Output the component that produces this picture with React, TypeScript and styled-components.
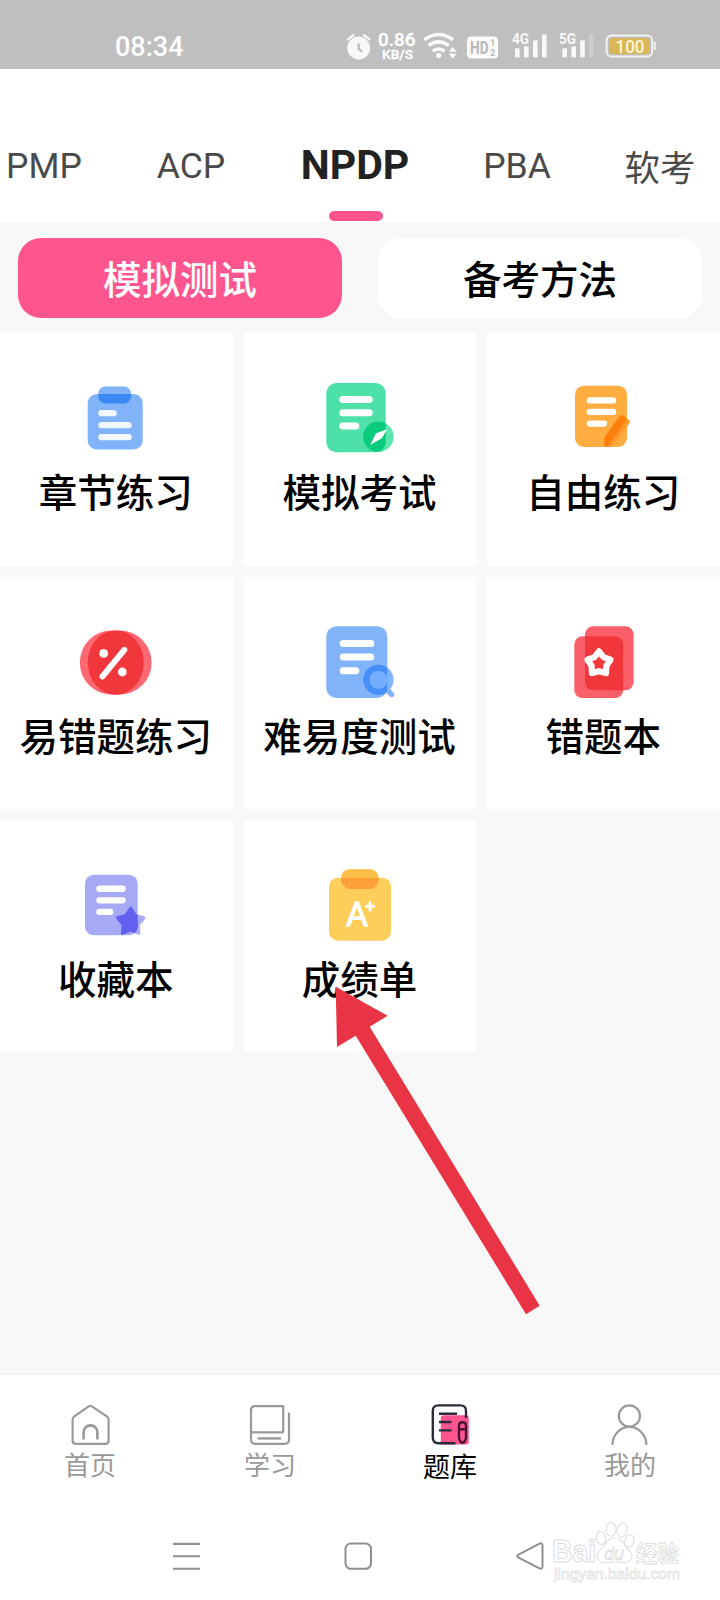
import React from 'react';
import styled, { createGlobalStyle } from 'styled-components';

const Global = createGlobalStyle`
  * { box-sizing: border-box; }
  body { margin: 0; background: #f8f8f8; font-family: Roboto, "Noto Sans CJK SC", sans-serif; }
  svg { display: block; flex: none; }
`;

const Screen = styled.div`
  position: relative;
  display: flex;
  flex-direction: column;
  width: 720px;
  height: 1600px;
  overflow: hidden;
  background: #f8f8f8;
`;

/* ---------- status bar ---------- */
const StatusBar = styled.header`
  display: flex;
  align-items: center;
  height: 69px;
  padding: 24px 64px 0 115px;
  background: #bfbfbf;
  color: #fff;
`;

const Clock = styled.time`
  flex: 1;
  font-size: 27px;
  font-weight: 500;
  line-height: 44px;
`;

const StatusIcons = styled.div`
  display: flex;
  align-items: center;
`;

/* ---------- exam tabs ---------- */
const ExamTabs = styled.nav`
  display: flex;
  align-items: flex-end;
  height: 153px;
  padding-left: 4px;
  background: #fff;
  white-space: nowrap;
`;

const ExamTab = styled.a<{ $active?: boolean; $width: number; $drop?: number }>`
  display: flex;
  flex-direction: column;
  align-items: center;
  flex: none;
  width: ${(p) => p.$width}px;
  color: ${(p) => (p.$active ? '#222' : '#4a4a4a')};
  font-size: ${(p) => (p.$active ? 41 : 35.5)}px;
  font-weight: ${(p) => (p.$active ? 700 : 400)};
  line-height: 60px;
  padding-bottom: ${(p) => (p.$active ? 1 : 26 - (p.$drop ?? 0))}px;
`;

const Indicator = styled.span`
  width: 54px;
  height: 10px;
  margin: 16px 0 0 1px;
  border-radius: 5px;
  background: #fe558f;
`;

/* ---------- switch ---------- */
const Switch = styled.div`
  display: flex;
  gap: 36px;
  padding: 15.5px 18px 15px;
`;

const SwitchButton = styled.button<{ $active?: boolean }>`
  flex: 1;
  height: 80.5px;
  padding: 0 0 2px;
  border: 0;
  border-radius: 23px;
  background: ${(p) => (p.$active ? '#ff558f' : '#fff')};
  color: ${(p) => (p.$active ? '#fff' : '#000')};
  font: 500 38.5px "Noto Sans CJK SC", sans-serif;
`;

/* ---------- tile grid ---------- */
const Grid = styled.main`
  display: grid;
  grid-template-columns: repeat(3, 1fr);
  grid-auto-rows: 232.67px;
  gap: 11px;
  flex: 1;
`;

const Tile = styled.section`
  display: flex;
  flex-direction: column;
  align-items: center;
  padding-top: 44px;
  background: #fff;
`;

const TileLabel = styled.span`
  margin: 5px 1px 0 0;
  color: #000;
  font: 500 38.5px/56px "Noto Sans CJK SC", sans-serif;
  white-space: nowrap;
`;

/* ---------- bottom navigation ---------- */
const TabBar = styled.nav`
  display: flex;
  height: 127px;
  border-top: 2px solid #f2f2f2;
  background: #fff;
`;

const TabItem = styled.a<{ $active?: boolean }>`
  display: flex;
  flex-direction: column;
  align-items: center;
  flex: 1;
  padding-top: 27px;
  color: ${(p) => (p.$active ? '#000' : '#999')};
  font: 400 ${(p) => (p.$active ? 27 : 26)}px/38px "Noto Sans CJK SC", sans-serif;

  span { margin-top: ${(p) => (p.$active ? 1 : -1)}px; }
`;

const SystemBar = styled.footer`
  display: flex;
  justify-content: space-between;
  height: 100px;
  padding: 39px 174px 0 170px;
  background: #fff;
`;

/* ---------- overlays ---------- */
const Pointer = styled.svg`
  position: absolute;
  left: 330px;
  top: 980px;
`;

const Watermark = styled.svg`
  position: absolute;
  left: 545px;
  top: 1515px;
`;

type LineProps = { x: number; y: number; w: number; h?: number; fill?: string };
const Line = ({ x, y, w, h = 6.3, fill = '#fff' }: LineProps) => (
  <rect x={x} y={y} width={w} height={h} rx={h / 2} fill={fill} />
);

const Icon = ({ children }: { children: React.ReactNode }) => (
  <svg width="80" height="80" viewBox="0 0 80 80">{children}</svg>
);

const starPoints = (cx: number, cy: number, outer: number, inner: number) =>
  Array.from({ length: 10 }, (_, i) => {
    const r = i % 2 ? inner : outer;
    const a = ((-90 + i * 36) * Math.PI) / 180;
    return `${(cx + r * Math.cos(a)).toFixed(2)},${(cy + r * Math.sin(a)).toFixed(2)}`;
  }).join(' ');

const ChapterIcon = () => (
  <Icon>
    <rect x="22.3" y="9.5" width="32.7" height="17" rx="7" fill="#80b3f8" />
    <rect x="11.7" y="17" width="55" height="55.5" rx="9" fill="#80b3f8" />
    <path d="M22.3 17H55V19.5a7 7 0 0 1-7 7H29.3a7 7 0 0 1-7-7Z" fill="#3c88f5" />
    <Line x={22.3} y={33} w={18.4} fill="#f1f7ff" />
    <Line x={22.3} y={45} w={33.4} fill="#f1f7ff" />
    <Line x={22.3} y={57} w={33.4} fill="#f1f7ff" />
  </Icon>
);

const MockIcon = () => (
  <Icon>
    <clipPath id="mock"><rect x="6.3" y="6" width="59.4" height="69.3" rx="10" /></clipPath>
    <circle cx="58.4" cy="59.7" r="15.2" fill="#5ce6b1" />
    <rect x="6.3" y="6" width="59.4" height="69.3" rx="10" fill="#4de1a9" />
    <circle cx="58.4" cy="59.7" r="15.2" fill="#08cb7b" clipPath="url(#mock)" />
    <Line x={19.3} y={19} w={33.4} h={7} />
    <Line x={19.3} y={32.3} w={33.4} h={7} />
    <Line x={19.3} y={45.6} w={20} h={7} />
    <path d="M67 52.3 56 56.3 50.3 67.7 62 61.3Z" fill="#fff" />
  </Icon>
);

const FreeIcon = () => (
  <Icon>
    <rect x="11" y="8.7" width="52" height="61.3" rx="9" fill="#ffac40" />
    <path d="M40.4 60.5 55.8 39q1.3-1.6 3-.4l6.2 4.3q1.7 1.3.6 3L52.3 63.9q-2.3 4-6 5l-3.3.9q-2.6.6-2.6-1.3Z" fill="#ff9a2c" />
    <path d="M40.4 60.5 55.8 39q1.3-1.6 3-.4l4.2 3L44.6 69.2q-4.2 1.6-4.2-.7Z" fill="#ff7f0c" />
    <Line x={22.7} y={20.3} w={29.4} />
    <Line x={22.7} y={31.8} w={29.4} />
    <Line x={22.7} y={43.4} w={20.4} />
  </Icon>
);

const PercentIcon = () => (
  <Icon>
    <circle cx="36" cy="41.6" r="32.2" fill="#fd6873" />
    <circle cx="43.4" cy="41.6" r="32.2" fill="#fd6873" />
    <ellipse cx="39.8" cy="41.6" rx="28" ry="32.2" fill="#f2373c" />
    <circle cx="27.7" cy="32.4" r="4.4" fill="#fff" />
    <circle cx="46.3" cy="51" r="4.4" fill="#fff" />
    <path d="M48.3 28.9 26.5 55.4" stroke="#fff" strokeWidth="6" strokeLinecap="round" />
  </Icon>
);

const DifficultyIcon = () => (
  <Icon>
    <clipPath id="sheet"><rect x="6.3" y="5.3" width="61" height="71.7" rx="10" /></clipPath>
    <rect x="6.3" y="5.3" width="61" height="71.7" rx="10" fill="#80b3f8" />
    <path d="m68 69.5 3.6 4" stroke="#80b3f8" strokeWidth="5.4" strokeLinecap="round" />
    <circle cx="58.4" cy="58.8" r="12.1" fill="none" stroke="#80b3f8" strokeWidth="6" />
    <circle cx="58.4" cy="58.8" r="12.1" fill="#73adfb" stroke="#468ff8" strokeWidth="6" clipPath="url(#sheet)" />
    <Line x={19.7} y={19} w={34.6} h={7} />
    <Line x={19.7} y={32.6} w={34.6} h={7} />
    <Line x={19.7} y={46.2} w={19.6} h={7} />
  </Icon>
);

const WrongBookIcon = () => (
  <Icon>
    <rect x="21" y="5.3" width="48.6" height="64" rx="8" fill="#f9606a" />
    <rect x="10.3" y="15.3" width="48.9" height="61.7" rx="8" fill="#f9606a" />
    <path d="M21 15.3H51.2a8 8 0 0 1 8 8V69.3H29a8 8 0 0 1-8-8Z" fill="#f2373c" />
    <polygon points={starPoints(35, 42.4, 12, 7.8)} fill="#f2373c" stroke="#fff" strokeWidth="6.2" strokeLinejoin="round" />
  </Icon>
);

const FavouriteIcon = () => (
  <Icon>
    <clipPath id="note"><rect x="9" y="10.7" width="52.7" height="60.6" rx="9" /></clipPath>
    <rect x="9" y="10.7" width="52.7" height="60.6" rx="9" fill="#a6aaf5" />
    <polygon points={starPoints(54.7, 58, 14, 8)} fill="#aaaafa" stroke="#aaaafa" strokeWidth="3" strokeLinejoin="round" />
    <polygon points={starPoints(54.7, 58, 14, 8)} fill="#6260ef" stroke="#6260ef" strokeWidth="3" strokeLinejoin="round" clipPath="url(#note)" />
    <Line x={20.3} y={21.6} w={29.4} />
    <Line x={20.3} y={33.2} w={29.4} />
    <Line x={20.3} y={44.8} w={17} />
  </Icon>
);

const ScoreIcon = () => (
  <Icon>
    <rect x="21" y="4.9" width="37.7" height="20" rx="9" fill="#fec04b" />
    <rect x="9" y="13.7" width="62" height="63" rx="9" fill="#fece5b" />
    <path d="M21 13.7H58.7V15.9a9 9 0 0 1-9 9H30a9 9 0 0 1-9-9Z" fill="#fda037" />
    <text x="37" y="62" textAnchor="middle" fontFamily="Lato, sans-serif" fontWeight="400" fontSize="33" textLength="21" lengthAdjust="spacingAndGlyphs" fill="#fff" stroke="#fff" strokeWidth="1.3" strokeLinejoin="round">A</text>
    <path d="M50 38.5v7.6M46.2 42.3h7.6" stroke="#fff" strokeWidth="3" strokeLinecap="round" />
  </Icon>
);

const tiles = [
  { label: '章节练习', icon: <ChapterIcon /> },
  { label: '模拟考试', icon: <MockIcon /> },
  { label: '自由练习', icon: <FreeIcon /> },
  { label: '易错题练习', icon: <PercentIcon /> },
  { label: '难易度测试', icon: <DifficultyIcon /> },
  { label: '错题本', icon: <WrongBookIcon /> },
  { label: '收藏本', icon: <FavouriteIcon /> },
  { label: '成绩单', icon: <ScoreIcon /> },
];

const StatusGlyphs = () => (
  <svg width="316" height="40" viewBox="340 26 316 40" fontFamily="Roboto, sans-serif" fill="#fff">
    {/* alarm */}
    <g opacity=".9">
      <circle cx="358.7" cy="47" r="11.4" />
      <path d="M348 38.4 353.4 34.2M369.4 38.4l-5.4-4.2" stroke="#fff" strokeWidth="2.4" strokeLinecap="round" />
      <path d="M358.7 42.5v5.4l3.4 2.8" stroke="#bfbfbf" strokeWidth="2.4" fill="none" />
    </g>
    <text x="378" y="45" fontSize="19" fontWeight="500" textLength="37.5" lengthAdjust="spacingAndGlyphs" stroke="#fff" strokeWidth=".3">0.86</text>
    <text x="382" y="58.2" fontSize="13.5" fontWeight="500" textLength="31" lengthAdjust="spacingAndGlyphs" stroke="#fff" strokeWidth=".3">KB/S</text>
    {/* wifi */}
    <g opacity=".93" fill="none" stroke="#fff" strokeWidth="3.6">
      <path d="M424.3 38.8q14.4-10.6 28.8 0" />
      <path d="M428.6 44.6q10-7.4 20.2 0" />
      <path d="M432.8 50.2q6-4.4 11.8 0" />
    </g>
    <circle cx="438.7" cy="54.4" r="2.5" />
    <path d="m452.7 46 3.8 4.8h-7.6ZM452.700 57.400l3.8-4.600h-7.6Z" />
    {/* HD badge */}
    <rect x="467" y="35.6" width="31" height="21.9" rx="4" opacity=".93" />
    <g fill="#b8b8b8" fontWeight="700">
      <text x="470" y="52.8" fontSize="18" textLength="18.5" lengthAdjust="spacingAndGlyphs">HD</text>
      <text x="490.2" y="45" fontSize="8.6">1</text>
      <text x="490.2" y="54.8" fontSize="8.6">2</text>
    </g>
    {/* signal meters */}
    <g opacity=".9">
      <text x="512" y="43" fontSize="15.5" fontWeight="700" textLength="17" lengthAdjust="spacingAndGlyphs">4G</text>
      <rect x="515" y="47.4" width="4.6" height="9" />
      <rect x="524" y="45.4" width="4.6" height="11" />
      <rect x="533" y="39.4" width="4.6" height="17" />
      <rect x="542" y="33.4" width="4.6" height="23" />
      <text x="559" y="43" fontSize="15.5" fontWeight="700" textLength="17" lengthAdjust="spacingAndGlyphs">5G</text>
      <rect x="562.4" y="47.4" width="4.6" height="9" />
      <rect x="571.4" y="45.4" width="4.6" height="11" />
      <rect x="580.2" y="39.4" width="4.6" height="17" />
      <rect x="589" y="33.4" width="4.6" height="23" opacity=".25" />
    </g>
    {/* battery */}
    <rect x="606.6" y="34.6" width="45.6" height="20.8" rx="5" fill="none" stroke="#f3f3f3" strokeWidth="2" />
    <rect x="609.4" y="37" width="40" height="16" rx="3" fill="#d9b757" />
    <path d="M654.8 40.6v8.4" stroke="#f3f3f3" strokeWidth="1.8" />
    <text x="615.5" y="51.6" fontSize="18" fontWeight="500" textLength="29" lengthAdjust="spacingAndGlyphs" fill="#fff6dc">100</text>
  </svg>
);

const HomeIcon = () => (
  <svg width="44" height="44" viewBox="0 0 44 44" fill="none" stroke="#999" strokeWidth="2.2">
    <path d="M20.6 4.4q1.6-1.1 3.2 0L38.8 14.4q1.8 1.3 1.8 3.4V38.4q0 3.4-3.4 3.4H8q-3.4 0-3.4-3.4V17.8q0-2.1 1.8-3.4Z" />
    <path d="M15.600 37.600V30.300a6.900 6.900 0 0 1 13.800 0v7.300" strokeWidth="2.6" />
  </svg>
);

const StudyIcon = () => (
  <svg width="44" height="44" viewBox="0 0 44 44" fill="none" stroke="#999" strokeWidth="2.2">
    <path d="M35.200 30.400V4.200H7q-4 0-4 4V37.800q0 4 4 4H37q4 0 4-4V10.500M3 30.400H35.200" />
    <path d="M9.600 36.400H33" strokeWidth="2.4" />
  </svg>
);

const BankIcon = () => (
  <svg width="44" height="44" viewBox="0 0 44 44" fill="none" stroke="#2b2b3a" strokeWidth="2.4">
    <rect x="12.8" y="13.2" width="28" height="29.4" rx="3" fill="#ff558f" stroke="none" />
    <path d="M38 16V8.800q0-5.400-5.400-5.400H10.400Q4.800 3.400 4.800 8.800V35.600q0 5.600 5.600 5.600H27.500" />
    <path d="M11 11.800H29M11 20H23.500M11 28.400H23.500" />
    <path d="M31 23.500q0-3.200 3.500-3.200t3.500 3.200V36.500L36 40.500H33L31 36.500ZM31 27.200H38" stroke="#4a1535" strokeLinejoin="round" />
  </svg>
);

const MeIcon = () => (
  <svg width="44" height="44" viewBox="0 0 44 44" fill="none" stroke="#999" strokeWidth="2.2">
    <circle cx="21.4" cy="14" r="10.6" />
    <path d="M4.400 43a17 18.200 0 0 1 34 0" />
  </svg>
);

export default function App() {
  return (
    <>
      <Global />
      <Screen>
        <StatusBar>
          <Clock>08:34</Clock>
          <StatusIcons><StatusGlyphs /></StatusIcons>
        </StatusBar>

        <ExamTabs>
          <ExamTab $width={80}>PMP</ExamTab>
          <ExamTab $width={214}>ACP</ExamTab>
          <ExamTab $width={114} $active>NPDP<Indicator /></ExamTab>
          <ExamTab $width={210}>PBA</ExamTab>
          <ExamTab $width={76} $drop={3}>软考</ExamTab>
        </ExamTabs>

        <Switch>
          <SwitchButton $active>模拟测试</SwitchButton>
          <SwitchButton>备考方法</SwitchButton>
        </Switch>

        <Grid>
          {tiles.map((t) => (
            <Tile key={t.label}>
              {t.icon}
              <TileLabel>{t.label}</TileLabel>
            </Tile>
          ))}
        </Grid>

        <TabBar>
          <TabItem><HomeIcon /><span>首页</span></TabItem>
          <TabItem><StudyIcon /><span>学习</span></TabItem>
          <TabItem $active><BankIcon /><span>题库</span></TabItem>
          <TabItem><MeIcon /><span>我的</span></TabItem>
        </TabBar>

        <SystemBar>
          <svg width="32" height="34" viewBox="0 0 32 34" stroke="#8f8f8f" strokeWidth="2.1">
            <path d="M3 4.900H30M3 17.200H30M3 29.800H30" />
          </svg>
          <svg width="32" height="34" viewBox="0 0 32 34" fill="none" stroke="#8f8f8f" strokeWidth="2">
            <rect x="3.5" y="4.5" width="25.5" height="25.3" rx="5.5" />
          </svg>
          <svg width="32" height="34" viewBox="0 0 32 34" fill="none" stroke="#8f8f8f" strokeWidth="2">
            <path d="M4.600 15.600 25.500 4.700q3-1.200 3 1.800V27.500q0 3-3 1.800L4.600 18.600q-2.600-1.500 0-3Z" />
          </svg>
        </SystemBar>

        <Pointer width="220" height="340" viewBox="330 980 220 340">
          <path d="M335.700 986.700 387.700 1015.700 369.700 1026.700 539.700 1305.700 526 1314.300 355.700 1035.700 337 1047Z" fill="#e93446" />
        </Pointer>

        <Watermark width="145" height="75" viewBox="545 1515 145 75" fill="#fff" stroke="#dedede" strokeWidth="1.1">
          <text x="552" y="1562.3" fontFamily="Liberation Sans, sans-serif" fontWeight="700" fontSize="31" textLength="44" lengthAdjust="spacingAndGlyphs">Bai</text>
          <ellipse cx="601" cy="1538" rx="4.7" ry="6.5" transform="rotate(-10 601 1538)" />
          <ellipse cx="611" cy="1529.3" rx="5" ry="7" />
          <ellipse cx="622" cy="1530" rx="5" ry="7" transform="rotate(14 622 1530)" />
          <ellipse cx="629.3" cy="1541" rx="4.6" ry="6.3" transform="rotate(14 629.3 1541)" />
          <path d="M614.500 1538q6 0 9.500 6 2 3.500 5.500 6.500 4.500 5 1.500 9-3.500 4.500-10.500 3-6-1-12 0-7 1.500-10.500-3-3-4 1.500-9 3.500-3 5.500-6.500 3.500-6 9.500-6Z" />
          <text x="604" y="1560" fontFamily="Liberation Sans, sans-serif" fontStyle="italic" fontWeight="400" fontSize="19" textLength="20" lengthAdjust="spacingAndGlyphs" strokeWidth=".9">du</text>
          <text x="636" y="1561.5" fontFamily="Noto Sans CJK SC, sans-serif" fontWeight="700" fontSize="23" textLength="43" lengthAdjust="spacingAndGlyphs" strokeWidth=".9">经验</text>
          <text x="554" y="1579" fontFamily="Liberation Sans, sans-serif" fontSize="15" textLength="126" lengthAdjust="spacingAndGlyphs" stroke="#e4e4e4" strokeWidth=".8">jingyan.baidu.com</text>
        </Watermark>
      </Screen>
    </>
  );
}
